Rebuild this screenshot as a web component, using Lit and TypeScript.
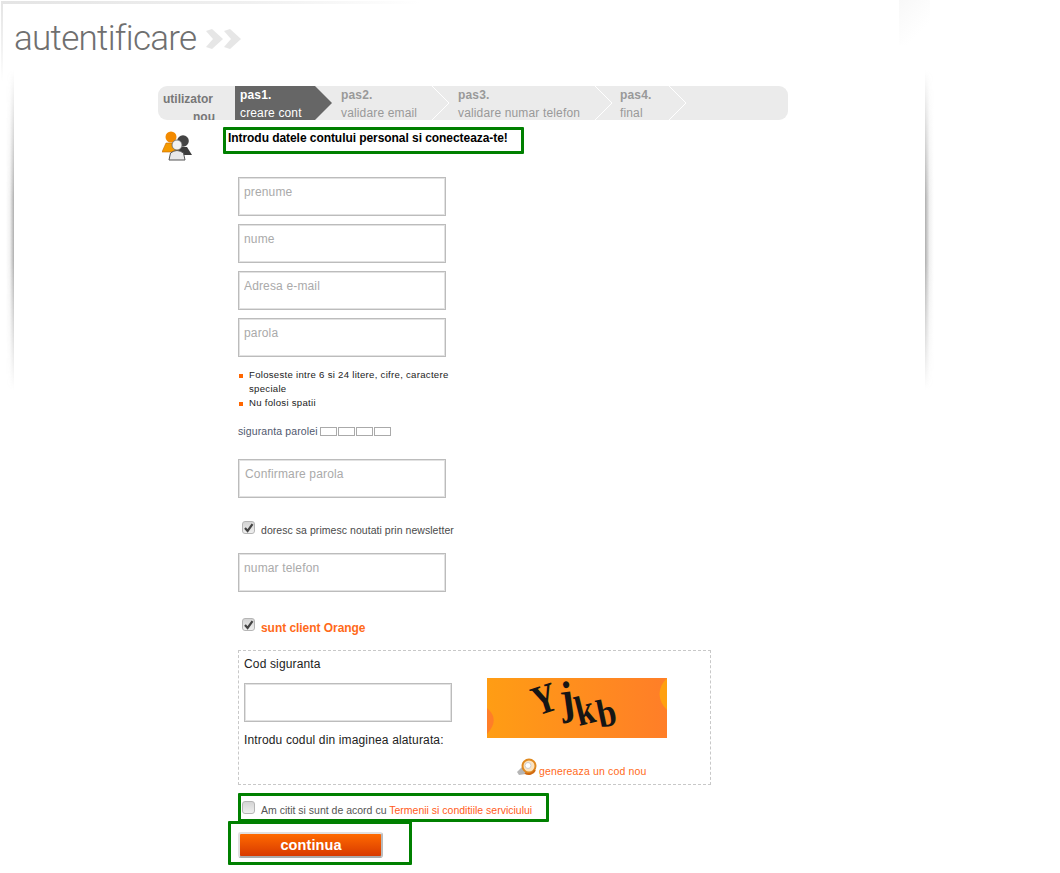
import { LitElement, html, css, svg } from "lit";
import { customElement } from "lit/decorators.js";

const steps = [
  { top: "pas1.", sub: "creare cont", w: 106, tip: 0, active: true },
  { top: "pas2.", sub: "validare email", w: 117, tip: 108, active: false },
  { top: "pas3.", sub: "validare numar telefon", w: 162, tip: 154, active: false },
  { top: "pas4.", sub: "final", w: 68, tip: 66, active: false },
];

const check = svg`<path d="M3 7 L5.6 10 L10.5 3.2" fill="none" stroke="#444" stroke-width="2.2"/>`;

@customElement("app-root")
export class AppRoot extends LitElement {
  static styles = css`
    :host { display: block; width: 1060px; height: 873px; position: relative; overflow: hidden; background: #fff; font-family: "Liberation Sans", Arial, sans-serif; }
    .decor { position: absolute; pointer-events: none; }
    .top-line { left: 1px; top: 1px; width: 420px; height: 3px; background: linear-gradient(90deg, #e4e4e4, #f0f0f0 60%, #fff); }
    .left-line { left: 1px; top: 1px; width: 2px; height: 80px; background: linear-gradient(180deg, #e4e4e4, #f2f2f2 60%, #fff); }
    .shadow-l { left: 6px; top: 70px; width: 8px; height: 320px; background: linear-gradient(90deg, rgba(130,130,130,0), rgba(130,130,130,.12) 50%, rgba(130,130,130,.65)); -webkit-mask-image: linear-gradient(180deg, transparent, #000 40%, #000 60%, transparent); }
    .shadow-r { left: 925px; top: 70px; width: 9px; height: 320px; background: linear-gradient(270deg, rgba(130,130,130,0), rgba(130,130,130,.12) 50%, rgba(130,130,130,.65)); -webkit-mask-image: linear-gradient(180deg, transparent, #000 40%, #000 60%, transparent); }
    .corner { left: 899px; top: 0; width: 31px; height: 45px; background: linear-gradient(135deg, #f8f8f8, #fff 70%); }
    .page { position: relative; }
    .head { display: flex; align-items: center; gap: 10px; height: 76px; padding: 0 0 0 14px; box-sizing: border-box; }
    h1 { margin: 0; font: 300 35px/1 Roboto, sans-serif; color: #6f6f6f; letter-spacing: -0.7px; }
    .head svg { display: block; margin-top: 2px; }
    .stepper { margin: 10px 0 0 158px; width: 630px; height: 34px; background: #ebebeb; border-radius: 9px; display: flex; overflow: hidden; font-size: 12px; line-height: 18px; letter-spacing: .15px; }
    .who { width: 52px; padding: 4px 0 0 5px; margin-right: 20px; font-weight: bold; color: #777; flex: none; letter-spacing: 0; }
    .who div:last-child { text-align: right; }
    .step { position: relative; flex: none; box-sizing: border-box; color: #999; }
    .step b { display: block; }
    .step span { display: block; white-space: nowrap; }
    .step.active { color: #fff; }
    .step svg { position: absolute; top: 0; display: block; }
    .step .txt { position: relative; }
    .intro { display: flex; margin: 7px 0 0 158px; height: 50px; }
    .intro svg { margin: 4px 0 0 4px; display: block; flex: none; }
    .note { margin-left: 30px; height: 27px; width: 301px; border: 3px solid #008000; border-radius: 1px; box-sizing: border-box; padding: 0 0 0 2px; font: bold 12px/16px "Liberation Sans", Arial, sans-serif; letter-spacing: -.06px; color: #000; white-space: nowrap; }
    .form { margin-left: 238px; width: 480px; }
    .inp { display: block; box-sizing: border-box; width: 208px; height: 39px; margin: 0 0 8px; border: 1px solid #bcbcbc; box-shadow: inset 0 0 0 1px #e2e2e2; border-radius: 0; outline: none; padding: 0 5px 10px; background: #fff; font: 12px "Liberation Sans", Arial, sans-serif; letter-spacing: .15px; color: #333; }
    .inp::placeholder { color: #aaa; opacity: 1; }
    .inp.shift { padding-left: 6px; }
    ul { margin: 11px 0 0; padding: 0 0 0 11px; list-style: none; width: 215px; font-size: 9.6px; line-height: 14px; letter-spacing: .28px; color: #222; }
    li { position: relative; }
    li::before { content: ""; position: absolute; left: -10px; top: 6px; width: 4px; height: 4px; background: #f60; }
    .strength { display: flex; align-items: center; margin-top: 14px; height: 14px; font-size: 10.5px; letter-spacing: .12px; color: #50586e; }
    .strength i { display: block; width: 17px; height: 9px; box-sizing: border-box; margin-right: 1px; border: 1px solid #aaa; background: #fff; }
    .strength span { margin-right: 2px; }
    .gap { height: 21px; }
    .check { display: flex; align-items: flex-start; padding-left: 4px; white-space: nowrap; }
    .box { display: block; flex: none; width: 13px; height: 13px; box-sizing: border-box; border: 1px solid #b5b5b5; border-radius: 3px; background: linear-gradient(180deg, #d4d4d4, #efefef); margin-right: 6px; }
    .box svg { display: block; margin: -1px; }
    .nl { margin: 23px 0 17px; font-size: 10.5px; line-height: 12px; color: #4a4a4a; }
    .nl span { padding-top: 3px; letter-spacing: .05px; }
    .orange { margin: 26px 0 15px; font: bold 12px/13px "Liberation Sans", Arial, sans-serif; letter-spacing: -.05px; color: #ff6a1a; }
    .orange span { padding-top: 4px; }
    .cap { box-sizing: border-box; width: 473px; height: 135px; border: 1px dashed #c8c8c8; padding: 6px 5px 5px; display: flex; font-size: 12px; letter-spacing: .15px; color: #222; }
    .cap .l { width: 243px; flex: none; }
    .cap .t { line-height: 14px; }
    .cap .inp { margin: 12px 0 11px; }
    .cap .r { padding-top: 21px; }
    .cap .r > svg { display: block; }
    .regen { display: flex; align-items: flex-end; margin: 20px 0 0 30px; font-size: 10.5px; letter-spacing: .15px; color: #ff6a1a; white-space: nowrap; }
    .regen svg { display: block; margin-right: 2px; }
    .regen span { line-height: 12px; margin-bottom: -1px; }
    .terms { box-sizing: border-box; width: 311px; height: 29px; margin-top: 8px; border: 3px solid #008000; border-radius: 1px; padding: 5px 0 0 1px; font-size: 10.5px; line-height: 13px; color: #555; }
    .terms .link { color: #ff5a1a; }
    .terms .tx { padding-top: 3px; }
    .btnbox { box-sizing: border-box; width: 184px; height: 44px; margin: -1px 0 0 -10px; border: 3px solid #008000; border-radius: 1px; padding: 8px 0 0 7px; }
    button { display: block; box-sizing: border-box; width: 145px; height: 26px; padding: 1px 0 0 1px; border: 2px solid #e2e0e0; border-right-color: #bbb; border-bottom-color: #aaa; border-radius: 3px; background: linear-gradient(180deg, #ff6a00, #d83a00); color: #fff; font: bold 14.5px/1 "Liberation Sans", Arial, sans-serif; letter-spacing: .1px; }
  `;

  private input(ph: string, shift = false) {
    return html`<input class="inp ${shift ? "shift" : ""}" placeholder=${ph} />`;
  }

  render() {
    return html`
      <div class="decor top-line"></div>
      <div class="decor left-line"></div>
      <div class="decor shadow-l"></div>
      <div class="decor shadow-r"></div>
      <div class="decor corner"></div>
      <div class="page">
        <div class="head">
          <h1>autentificare</h1>
          <svg width="36" height="22" viewBox="0 0 36 22"><path d="M0 3 L6 1 L17 11 L6 21 L0 19 L7 11Z M18 3 L24 1 L35 11 L24 21 L18 19 L25 11Z" fill="#e6e6e6"/></svg>
        </div>
        <div class="stepper">
          <div class="who"><div>utilizator</div><div>nou</div></div>
          ${steps.map((s) => html`
            <div class="step ${s.active ? "active" : ""}" style="width:${s.w}px">
              ${s.active
                ? html`<svg style="left:0" width="97" height="34" viewBox="0 0 97 34"><path d="M0 0 H80 L97 17 L80 34 H0Z" fill="#666"/></svg>`
                : html`<svg style="left:${s.tip - 17}px" width="18" height="34" viewBox="0 0 18 34"><path d="M0 0 L17 17 L0 34" fill="none" stroke="#fff" stroke-width="1"/></svg>`}
              <div class="txt" style="padding-left:${s.active ? 5 : 0}px"><b>${s.top}</b><span>${s.sub}</span></div>
            </div>`)}
        </div>
        <div class="intro">
          <svg width="31" height="30" viewBox="0 0 31 30">
            <circle cx="9" cy="6" r="5.5" fill="#f38a00"/>
            <path d="M0 21 L4 12 H14 L18 21Z" fill="#f59a00" stroke="#c46a00" stroke-width=".6"/>
            <circle cx="21" cy="10" r="5.8" fill="#444"/>
            <path d="M15 24 L18 16 H25 L30 24Z" fill="#3c3c3c"/>
            <path d="M7 29 L8.5 22 Q15 17 21.5 22 L23 29Z" fill="#e8e8e8" stroke="#555" stroke-width="1"/>
            <circle cx="15" cy="14" r="5" fill="#f2f2f2" stroke="#666" stroke-width=".8"/>
          </svg>
          <div class="note">Introdu datele contului personal si conecteaza-te!</div>
        </div>
        <div class="form">
          ${this.input("prenume")}
          ${this.input("nume")}
          ${this.input("Adresa e-mail")}
          ${this.input("parola")}
          <ul>
            <li>Foloseste intre 6 si 24 litere, cifre, caractere speciale</li>
            <li>Nu folosi spatii</li>
          </ul>
          <div class="strength"><span>siguranta parolei</span><i></i><i></i><i></i><i></i></div>
          <div class="gap"></div>
          ${this.input("Confirmare parola", true)}
          <div class="check nl">
            <div class="box"><svg width="13" height="13" viewBox="0 0 13 13">${check}</svg></div>
            <span>doresc sa primesc noutati prin newsletter</span>
          </div>
          ${this.input("numar telefon")}
          <div class="check orange">
            <div class="box"><svg width="13" height="13" viewBox="0 0 13 13">${check}</svg></div>
            <span>sunt client Orange</span>
          </div>
          <div class="cap">
            <div class="l">
              <div class="t">Cod siguranta</div>
              <input class="inp" />
              <div class="t">Introdu codul din imaginea alaturata:</div>
            </div>
            <div class="r">
              <svg width="180" height="60" viewBox="0 0 180 60">
                <defs><linearGradient id="cg" x1="0" y1="0" x2="1" y2="0"><stop offset="0" stop-color="#ff9d14"/><stop offset="1" stop-color="#ff7e28"/></linearGradient></defs>
                <rect width="180" height="60" fill="url(#cg)"/>
                <path d="M0 30 C9 38 9 46 0 56Z" fill="#ff7e28"/>
                <path d="M180 0 C170 10 170 22 180 32Z" fill="#ffa010"/>
                <g font-family="'Liberation Serif', serif" font-weight="bold" fill="#151515">
                  <text font-size="42" transform="translate(50 38) rotate(-18) scale(.8 1)">Y</text>
                  <text font-size="46" transform="translate(75 36) rotate(-8) scale(.9 1)">j</text>
                  <text font-size="42" transform="translate(92 48) rotate(-14) scale(.8 1)">k</text>
                  <text font-size="40" transform="translate(113 50) rotate(-12) scale(.85 1)">b</text>
                </g>
              </svg>
              <div class="regen">
                <svg width="20" height="18" viewBox="0 0 20 18">
                  <path d="M0 14 L5 9 L10 11 L9 16 L2 17Z" fill="#b5b5b5"/>
                  <circle cx="12" cy="8" r="6.5" fill="#fbe3c0" stroke="#e08a20" stroke-width="2"/>
                  <circle cx="11" cy="7.5" r="3" fill="#fff" stroke="#ccc"/>
                  <path d="M8 15 a7 7 0 0 0 10 -3" stroke="#d06a10" stroke-width="2" fill="none"/>
                </svg>
                <span>genereaza un cod nou</span>
              </div>
            </div>
          </div>
          <div class="terms check">
            <div class="box"></div>
            <div class="tx">Am citit si sunt de acord cu <span class="link">Termenii si conditiile serviciului</span></div>
          </div>
          <div class="btnbox"><button>continua</button></div>
        </div>
      </div>
    `;
  }
}
